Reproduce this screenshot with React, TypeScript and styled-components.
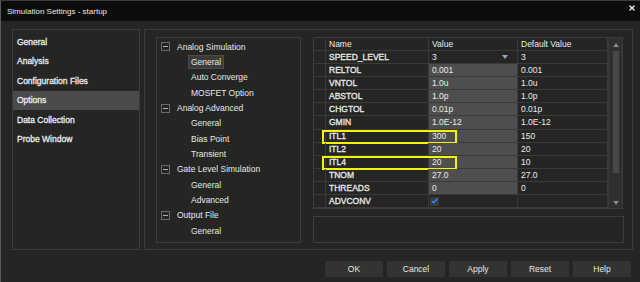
import React from "react";
import styled, { createGlobalStyle } from "styled-components";

const GlobalStyle = createGlobalStyle`
  html, body {
    margin: 0;
    padding: 0;
    background: #252624;
  }
  body {
    font-family: "Liberation Sans", Arial, sans-serif;
    font-size: 8.5px;
    color: #e4e4e4;
  }
`;

const Window = styled.div`
  width: 640px;
  height: 282px;
  box-sizing: border-box;
  background: #252624;
  border-left: 1px solid #5c5c5c;
  border-top: 1px solid #3c3c3c;
  display: flex;
  flex-direction: column;
  overflow: hidden;
`;

const TitleBar = styled.div`
  height: 20px;
  background: #0c0c0c;
  display: flex;
  align-items: center;
  padding: 0 6px 0 6px;
  font-size: 8px;
  color: #e8e8e8;
`;

const TitleText = styled.span`
  flex: 1;
`;

const CloseButton = styled.span`
  display: flex;
  margin-top: -7px;
  margin-right: -1px;
`;

const Body = styled.div`
  display: flex;
  gap: 4px;
  padding: 8px 7px 0 11px;
`;

const Panel = styled.div`
  box-sizing: border-box;
  border: 1px solid #3d3e3c;
  height: 221px;
  flex-shrink: 0;
`;

const NavPanel = styled(Panel)`
  width: 128px;
  padding-top: 2px;
`;

const NavItem = styled.div<{ $active?: boolean }>`
  height: 19.5px;
  display: flex;
  align-items: center;
  padding-left: 4px;
  background: ${({ $active }) => ($active ? "#4b4b4b" : "transparent")};
  color: #ececec;
  -webkit-text-stroke: 0.3px #ececec;
`;

const MainPanel = styled(Panel)`
  width: 489px;
  display: flex;
  gap: 12px;
  padding: 7px 9px 6px 11px;
`;

const TreeBox = styled.div`
  box-sizing: border-box;
  width: 145px;
  border: 1px solid #3d3e3c;
  padding-top: 1px;
`;

const TreeRow = styled.div<{ $child?: boolean }>`
  height: 15.35px;
  display: flex;
  align-items: center;
  padding-left: ${({ $child }) => ($child ? "34px" : "4px")};
  gap: 7px;
  color: #e6e6e6;
`;

const Expander = styled.span`
  box-sizing: border-box;
  width: 9px;
  height: 9px;
  border: 1px solid #6a6a6a;
  display: flex;
  align-items: center;
  justify-content: center;
  &::after {
    content: "";
    width: 5px;
    height: 1px;
    background: #b0b0b0;
  }
`;

const TreeLabel = styled.span<{ $selected?: boolean }>`
  padding: 1px 2px;
  margin-left: -3px;
  background: ${({ $selected }) => ($selected ? "#3b3b3b" : "transparent")};
  border: 1px solid ${({ $selected }) => ($selected ? "#4a4a4a" : "transparent")};
`;

const RightColumn = styled.div`
  flex: 1;
  display: flex;
  flex-direction: column;
  gap: 7px;
`;

const TableBox = styled.div`
  box-sizing: border-box;
  height: 172px;
  border: 1px solid #3d3e3c;
  display: flex;
`;

const Grid = styled.div`
  flex: 1;
  display: flex;
  flex-direction: column;
`;

const Row = styled.div<{ $header?: boolean }>`
  position: relative;
  display: grid;
  grid-template-columns: 12px 103px 89px 1fr;
  height: ${({ $header }) => ($header ? "13px" : "13.17px")};
`;

const Cell = styled.div<{ $gray?: boolean }>`
  box-sizing: border-box;
  border-right: 1px solid #3a3b39;
  border-bottom: 1px solid #3a3b39;
  display: flex;
  align-items: center;
  padding-left: 3px;
  background: ${({ $gray }) => ($gray ? "#4e4e4e" : "transparent")};
  color: #eaeaea;
  white-space: nowrap;
  overflow: hidden;
`;

const NameCell = styled(Cell)`
  -webkit-text-stroke: 0.3px #eaeaea;
`;

const DropCell = styled(Cell)`
  justify-content: space-between;
  padding-right: 9px;
`;

const Highlight = styled.div`
  position: absolute;
  left: 8px;
  width: 135px;
  top: 0px;
  height: 14px;
  box-sizing: border-box;
  border: 2px solid #f4f400;
  pointer-events: none;
`;

const Check = styled.span`
  width: 9px;
  height: 9px;
  background: #3a3a3a;
  display: flex;
  align-items: center;
  justify-content: center;
  margin-left: -2px;
`;

const ScrollBar = styled.div`
  width: 14px;
  background: #2f302e;
  border-left: 1px solid #3a3b39;
  display: flex;
  flex-direction: column;
  align-items: center;
  padding: 5px 0 3px;
  box-sizing: border-box;
`;

const Thumb = styled.div`
  width: 6px;
  height: 122px;
  background: #474846;
  margin: 4px 0 auto;
`;

const DescBox = styled.div`
  height: 27px;
  box-sizing: border-box;
  border: 1px solid #3d3e3c;
  margin-right: -1px;
`;

const ButtonBar = styled.div`
  display: flex;
  justify-content: flex-end;
  gap: 4px;
  padding: 11px 9px 0 0;
`;

const Button = styled.button`
  width: 58px;
  height: 16px;
  background: #333432;
  border: none;
  color: #e6e6e6;
  font-family: "Liberation Sans", Arial, sans-serif;
  font-size: 8.5px;
  padding: 0;
`;

const TriangleDown = ({ color = "#8fa6c4" }: { color?: string }) => (
  <svg width="6" height="4" viewBox="0 0 6 4">
    <path d="M0 0 L6 0 L3 4 Z" fill={color} />
  </svg>
);

const TriangleUp = ({ color = "#8a8a8a" }: { color?: string }) => (
  <svg width="6" height="4" viewBox="0 0 6 4">
    <path d="M0 4 L6 4 L3 0 Z" fill={color} />
  </svg>
);

type Param = {
  name: string;
  value: string;
  def: string;
  kind?: "drop" | "check";
  mark?: boolean;
};

const params: Param[] = [
  { name: "SPEED_LEVEL", value: "3", def: "3", kind: "drop" },
  { name: "RELTOL", value: "0.001", def: "0.001" },
  { name: "VNTOL", value: "1.0u", def: "1.0u" },
  { name: "ABSTOL", value: "1.0p", def: "1.0p" },
  { name: "CHGTOL", value: "0.01p", def: "0.01p" },
  { name: "GMIN", value: "1.0E-12", def: "1.0E-12" },
  { name: "ITL1", value: "300", def: "150", mark: true },
  { name: "ITL2", value: "20", def: "20" },
  { name: "ITL4", value: "20", def: "10", mark: true },
  { name: "TNOM", value: "27.0", def: "27.0" },
  { name: "THREADS", value: "0", def: "0" },
  { name: "ADVCONV", value: "", def: "", kind: "check" },
];

const navItems = [
  "General",
  "Analysis",
  "Configuration Files",
  "Options",
  "Data Collection",
  "Probe Window",
];

const tree: { label: string; child?: boolean; selected?: boolean }[] = [
  { label: "Analog Simulation" },
  { label: "General", child: true, selected: true },
  { label: "Auto Converge", child: true },
  { label: "MOSFET Option", child: true },
  { label: "Analog Advanced" },
  { label: "General", child: true },
  { label: "Bias Point", child: true },
  { label: "Transient", child: true },
  { label: "Gate Level Simulation" },
  { label: "General", child: true },
  { label: "Advanced", child: true },
  { label: "Output File" },
  { label: "General", child: true },
];

const ValueCell = ({ p }: { p: Param }) => {
  if (p.kind === "drop")
    return (
      <DropCell>
        {p.value}
        <TriangleDown />
      </DropCell>
    );
  if (p.kind === "check")
    return (
      <Cell>
        <Check>
          <svg width="7" height="6" viewBox="0 0 7 6">
            <path d="M0.8 3 L2.7 4.8 L6.3 0.8" stroke="#2a8cff" strokeWidth="1.4" fill="none" />
          </svg>
        </Check>
      </Cell>
    );
  return <Cell $gray>{p.value}</Cell>;
};

export default function App() {
  return (
    <>
      <GlobalStyle />
      <Window>
        <TitleBar>
          <TitleText>Simulation Settings - startup</TitleText>
          <CloseButton>
            <svg width="6" height="6" viewBox="0 0 6 6">
              <path d="M0.5 0.5 L5.5 5.5 M5.5 0.5 L0.5 5.5" stroke="#f0f0f0" strokeWidth="1.3" />
            </svg>
          </CloseButton>
        </TitleBar>
        <Body>
          <NavPanel>
            {navItems.map((n) => (
              <NavItem key={n} $active={n === "Options"}>
                {n}
              </NavItem>
            ))}
          </NavPanel>
          <MainPanel>
            <TreeBox>
              {tree.map((t, i) => (
                <TreeRow key={i} $child={t.child}>
                  {!t.child && <Expander />}
                  <TreeLabel $selected={t.selected}>{t.label}</TreeLabel>
                </TreeRow>
              ))}
            </TreeBox>
            <RightColumn>
              <TableBox>
                <Grid>
                  <Row $header>
                    <Cell />
                    <Cell>Name</Cell>
                    <Cell>Value</Cell>
                    <Cell>Default Value</Cell>
                  </Row>
                  {params.map((p) => (
                    <Row key={p.name}>
                      <Cell />
                      <NameCell>{p.name}</NameCell>
                      <ValueCell p={p} />
                      <Cell>{p.def}</Cell>
                      {p.mark && <Highlight />}
                    </Row>
                  ))}
                </Grid>
                <ScrollBar>
                  <TriangleUp />
                  <Thumb />
                  <TriangleDown color="#8a8a8a" />
                </ScrollBar>
              </TableBox>
              <DescBox />
            </RightColumn>
          </MainPanel>
        </Body>
        <ButtonBar>
          <Button>OK</Button>
          <Button>Cancel</Button>
          <Button>Apply</Button>
          <Button>Reset</Button>
          <Button>Help</Button>
        </ButtonBar>
      </Window>
    </>
  );
}
